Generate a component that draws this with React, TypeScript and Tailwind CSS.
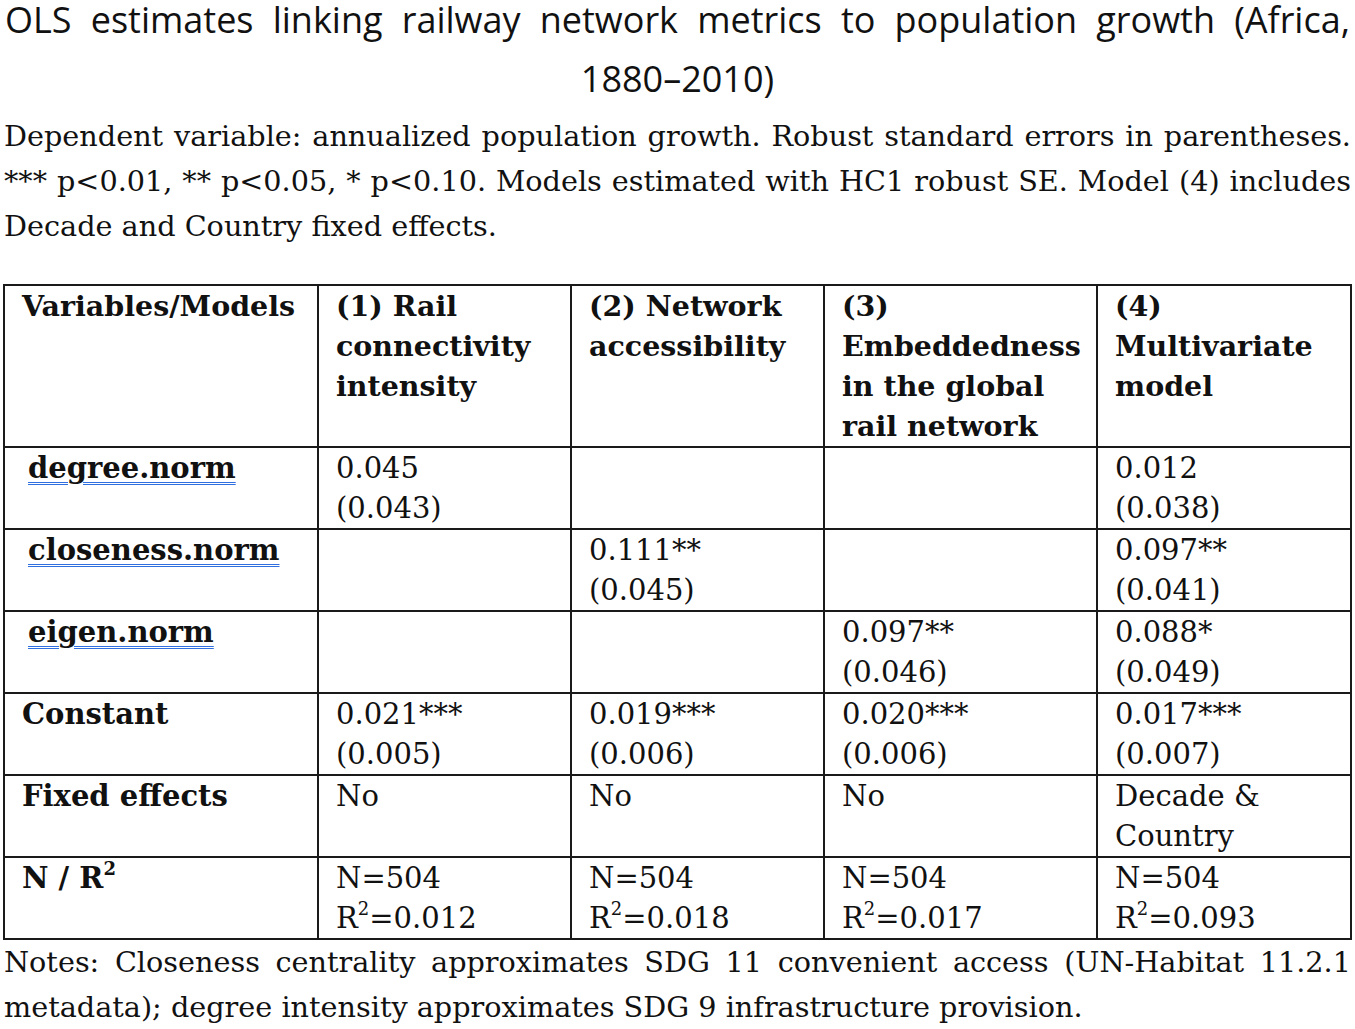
import React from "react";

const serif = "font-['DejaVu_Serif','Liberation_Serif',serif]";

function Lbl({ children, u = false }: { children: React.ReactNode; u?: boolean }) {
  return (
    <span
      className={
        "font-bold " +
        (u
          ? "ml-[6px] underline decoration-double decoration-[#2f6fe0] decoration-[1px] underline-offset-[4px]"
          : "")
      }
    >
      {children}
    </span>
  );
}

function R2({ v }: { v: string }) {
  return (
    <>
      R<sup className="text-[18px] top-[-0.7em]">2</sup>={v}
    </>
  );
}

const td = "border-2 border-[#1a1a1a] align-top p-0 pl-[17px] pr-[2px] whitespace-nowrap";
const just = "whitespace-nowrap text-justify [text-align-last:justify]";

export default function App() {
  return (
    <div className={"w-[1355px] h-[1029px] bg-white text-black overflow-hidden " + serif}>
      <div className="font-['Open_Sans','Noto_Sans',sans-serif] text-[36px] px-[5px] pt-[2px] text-[#111]">
        <div className={"leading-[36px] " + just}>
          OLS estimates linking railway network metrics to population growth (Africa,
        </div>
        <div className="leading-[60px] mt-[11px] text-center">1880–2010)</div>
      </div>
      <div className="text-[28.7px] leading-[45px] px-[4px] mt-[5px] text-[#111]">
        <div className={just}>
          Dependent variable: annualized population growth. Robust standard errors in parentheses.
        </div>
        <div className={just}>
          *** p&lt;0.01, ** p&lt;0.05, * p&lt;0.10. Models estimated with HC1 robust SE. Model (4) includes
        </div>
        <div>Decade and Country fixed effects.</div>
      </div>

      <table className="mt-[35px] ml-[3px] table-fixed border-collapse border-2 border-[#1a1a1a] text-[29px] leading-[40px] text-[#111]">
        <colgroup>
          <col className="w-[314px]" />
          <col className="w-[253px]" />
          <col className="w-[253px]" />
          <col className="w-[273px]" />
          <col className="w-[254px]" />
        </colgroup>
        <tbody>
          <tr className="font-bold text-[28.5px]">
            <td className={td}>Variables/Models</td>
            <td className={td}>
              (1) Rail
              <br />
              connectivity
              <br />
              intensity
            </td>
            <td className={td}>
              (2) Network
              <br />
              accessibility
            </td>
            <td className={td}>
              (3)
              <br />
              Embeddedness
              <br />
              in the global
              <br />
              rail network
            </td>
            <td className={td}>
              (4)
              <br />
              Multivariate
              <br />
              model
            </td>
          </tr>
          <tr>
            <td className={td}>
              <Lbl u>degree.norm</Lbl>
            </td>
            <td className={td}>
              0.045
              <br />
              (0.043)
            </td>
            <td className={td}></td>
            <td className={td}></td>
            <td className={td}>
              0.012
              <br />
              (0.038)
            </td>
          </tr>
          <tr>
            <td className={td}>
              <Lbl u>closeness.norm</Lbl>
            </td>
            <td className={td}></td>
            <td className={td}>
              0.111**
              <br />
              (0.045)
            </td>
            <td className={td}></td>
            <td className={td}>
              0.097**
              <br />
              (0.041)
            </td>
          </tr>
          <tr>
            <td className={td}>
              <Lbl u>eigen.norm</Lbl>
            </td>
            <td className={td}></td>
            <td className={td}></td>
            <td className={td}>
              0.097**
              <br />
              (0.046)
            </td>
            <td className={td}>
              0.088*
              <br />
              (0.049)
            </td>
          </tr>
          <tr>
            <td className={td}>
              <Lbl>Constant</Lbl>
            </td>
            <td className={td}>
              0.021***
              <br />
              (0.005)
            </td>
            <td className={td}>
              0.019***
              <br />
              (0.006)
            </td>
            <td className={td}>
              0.020***
              <br />
              (0.006)
            </td>
            <td className={td}>
              0.017***
              <br />
              (0.007)
            </td>
          </tr>
          <tr>
            <td className={td}>
              <Lbl>Fixed effects</Lbl>
            </td>
            <td className={td}>No</td>
            <td className={td}>No</td>
            <td className={td}>No</td>
            <td className={td}>
              Decade &amp;
              <br />
              Country
            </td>
          </tr>
          <tr>
            <td className={td}>
              <span className="font-bold">
                N / R<sup className="text-[18px] top-[-0.7em]">2</sup>
              </span>
            </td>
            <td className={td}>
              N=504
              <br />
              <R2 v="0.012" />
            </td>
            <td className={td}>
              N=504
              <br />
              <R2 v="0.018" />
            </td>
            <td className={td}>
              N=504
              <br />
              <R2 v="0.017" />
            </td>
            <td className={td}>
              N=504
              <br />
              <R2 v="0.093" />
            </td>
          </tr>
        </tbody>
      </table>

      <div className="text-[28.7px] leading-[45px] px-[4px] text-[#111]">
        <div className={just}>
          Notes: Closeness centrality approximates SDG 11 convenient access (UN-Habitat 11.2.1
        </div>
        <div>metadata); degree intensity approximates SDG 9 infrastructure provision.</div>
      </div>
    </div>
  );
}
